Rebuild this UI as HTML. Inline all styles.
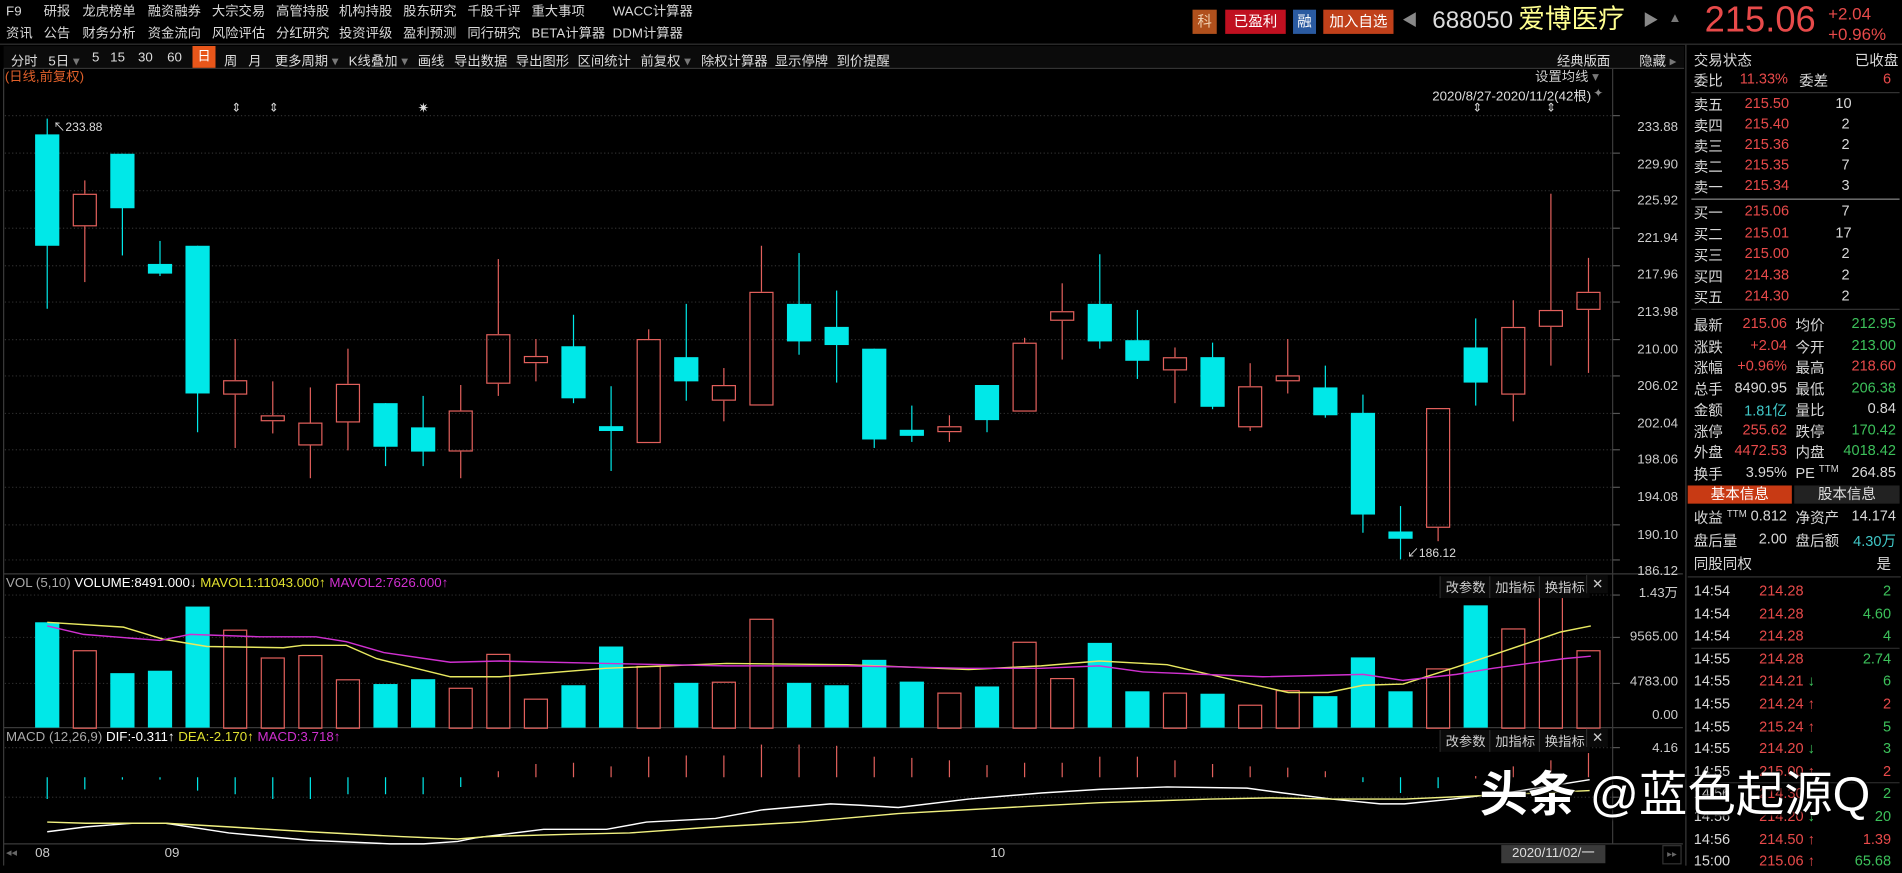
<!DOCTYPE html>
<html><head><meta charset="utf-8">
<style>
html,body{margin:0;padding:0;background:#000;width:1902px;height:866px;overflow:hidden}
#s{position:absolute;left:0;top:0;width:1571px;height:715px;transform:scale(1.21069);transform-origin:0 0;background:#000;font-family:"Liberation Sans","Noto Sans CJK SC",sans-serif;color:#d8d8d8;font-size:11px}
.a{position:absolute;white-space:nowrap;line-height:1}
.r{color:#e84a4a}.g{color:#3cc05a}.w{color:#e0e0e0}
.tb span{position:absolute;top:42px;font-size:11px;color:#ddd}
.rp{position:absolute;left:1393px;width:178px}
.row{position:absolute;left:0;width:175px;height:17px;font-size:12px}
.row span{position:absolute;top:0;white-space:nowrap}
.btn{position:absolute;font-size:11px;color:#ccc;background:#0a0a0a;border-left:1px solid #2a2a2a;padding:1px 4px}
</style></head><body><div id="s">
<div class="a" style="left:5px;top:5px">F9</div>
<div class="a" style="left:36px;top:5px">研报</div>
<div class="a" style="left:68px;top:5px">龙虎榜单</div>
<div class="a" style="left:122px;top:5px">融资融券</div>
<div class="a" style="left:175px;top:5px">大宗交易</div>
<div class="a" style="left:228px;top:5px">高管持股</div>
<div class="a" style="left:280px;top:5px">机构持股</div>
<div class="a" style="left:333px;top:5px">股东研究</div>
<div class="a" style="left:386px;top:5px">千股千评</div>
<div class="a" style="left:439px;top:5px">重大事项</div>
<div class="a" style="left:506px;top:5px">WACC计算器</div>
<div class="a" style="left:5px;top:23px">资讯</div>
<div class="a" style="left:36px;top:23px">公告</div>
<div class="a" style="left:68px;top:23px">财务分析</div>
<div class="a" style="left:122px;top:23px">资金流向</div>
<div class="a" style="left:175px;top:23px">风险评估</div>
<div class="a" style="left:228px;top:23px">分红研究</div>
<div class="a" style="left:280px;top:23px">投资评级</div>
<div class="a" style="left:333px;top:23px">盈利预测</div>
<div class="a" style="left:386px;top:23px">同行研究</div>
<div class="a" style="left:439px;top:23px">BETA计算器</div>
<div class="a" style="left:506px;top:23px">DDM计算器</div>
<div class="a" style="left:985px;top:8px;width:20px;height:20px;background:#b0501c;color:#f0d0b0;font-size:12px;line-height:20px;text-align:center">科</div>
<div class="a" style="left:1012px;top:8px;width:50px;height:20px;background:#c01020;color:#fff;font-size:12px;line-height:20px;text-align:center">已盈利</div>
<div class="a" style="left:1068px;top:8px;width:19px;height:20px;background:#2a5aa0;color:#fff;font-size:12px;line-height:20px;text-align:center">融</div>
<div class="a" style="left:1093px;top:8px;width:58px;height:20px;background:#c0401a;color:#fff;font-size:12px;line-height:20px;text-align:center">加入自选</div>
<div class="a" style="left:1158px;top:10px;color:#888;font-size:13px">◀</div>
<div class="a" style="left:1183px;top:7px;color:#ddd;font-size:20px">688050</div>
<div class="a" style="left:1254px;top:5px;color:#ffff90;font-size:22px">爱博医疗</div>
<div class="a" style="left:1357px;top:10px;color:#888;font-size:13px">▶</div>
<div class="a" style="left:1378px;top:10px;color:#777;font-size:11px">▲</div>
<div class="a" style="left:1408px;top:2px;color:#e84a4a;font-size:30px">215.06</div>
<div class="a" style="left:1510px;top:4px;color:#e84a4a;font-size:14px">+2.04</div>
<div class="a" style="left:1510px;top:21px;color:#e84a4a;font-size:14px">+0.96%</div>
<div class="a" style="left:0;top:36px;width:1571px;height:1px;background:#333"></div>
<div class="a" style="left:3px;top:38px;width:1388px;height:18px;background:#0b0b0b;border-bottom:1px solid #333"></div>
<div class="tb">
<span style="left:9px">分时</span><span style="left:40px">5日 <b style="color:#777;font-weight:normal">▾</b></span><span style="left:76px">5</span><span style="left:91px">15</span><span style="left:114px">30</span><span style="left:138px">60</span>
<span style="left:159px;top:38px;width:19px;height:18px;background:#e8561a;color:#fff;text-align:center;line-height:18px">日</span>
<span style="left:185px">周</span><span style="left:205px">月</span><span style="left:227px">更多周期 <b style="color:#777;font-weight:normal">▾</b></span><span style="left:288px">K线叠加 <b style="color:#777;font-weight:normal">▾</b></span><span style="left:345px">画线</span><span style="left:375px">导出数据</span><span style="left:426px">导出图形</span><span style="left:477px">区间统计</span><span style="left:529px">前复权 <b style="color:#777;font-weight:normal">▾</b></span><span style="left:579px">除权计算器</span><span style="left:640px">显示停牌</span><span style="left:691px">到价提醒</span>
<span style="left:1286px">经典版面</span><span style="left:1354px">隐藏 <b style="color:#777;font-weight:normal">▸</b></span>
</div>
<div class="a" style="left:4px;top:59px;color:#e0602a;font-size:11px">(日线,前复权)</div>
<div class="a" style="left:1268px;top:59px;color:#ccc;font-size:11px">设置均线 <span style="color:#777">▾</span></div>
<div class="a" style="left:1183px;top:75px;color:#ddd;font-size:11px">2020/8/27-2020/11/2(42根)</div>
<div class="a" style="left:1316px;top:73px;color:#888;font-size:10px">✦</div>
<div class="a" style="left:191px;top:85px;color:#ddd;font-size:10px">⇕</div>
<div class="a" style="left:222px;top:85px;color:#ddd;font-size:10px">⇕</div>
<div class="a" style="left:345px;top:85px;color:#ddd;font-size:11px">✷</div>
<div class="a" style="left:1216px;top:85px;color:#ddd;font-size:10px">⇕</div>
<div class="a" style="left:1277px;top:85px;color:#ddd;font-size:10px">⇕</div>
<div class="a" style="left:44px;top:101px;color:#ddd;font-size:10px">↖233.88</div>
<div class="a" style="left:1162px;top:453px;color:#ddd;font-size:10px">↙186.12</div>

<svg class="a" style="left:0;top:0" width="1571" height="715" id="sv"></svg>

<div class="a" style="left:1340px;top:90px;width:46px;text-align:right;font-size:11px;color:#ccc;line-height:30.6px">233.88<br>229.90<br>225.92<br>221.94<br>217.96<br>213.98<br>210.00<br>206.02<br>202.04<br>198.06<br>194.08<br>190.10<br>186.12</div>
<div class="a" style="left:1336px;top:485px;width:50px;text-align:right;font-size:11px;color:#ccc">1.43万</div>
<div class="a" style="left:1336px;top:521px;width:50px;text-align:right;font-size:11px;color:#ccc">9565.00</div>
<div class="a" style="left:1336px;top:558px;width:50px;text-align:right;font-size:11px;color:#ccc">4783.00</div>
<div class="a" style="left:1336px;top:586px;width:50px;text-align:right;font-size:11px;color:#ccc">0.00</div>
<div class="a" style="left:1336px;top:613px;width:50px;text-align:right;font-size:11px;color:#ccc">4.16</div>
<div class="a" style="left:5px;top:477px;font-size:11px"><span style="color:#aaa">VOL (5,10)</span> <span style="color:#fff">VOLUME:8491.000↓</span> <span style="color:#e0e030">MAVOL1:11043.000↑</span> <span style="color:#d030d0">MAVOL2:7626.000↑</span></div>
<div class="a" style="left:5px;top:604px;font-size:11px"><span style="color:#aaa">MACD (12,26,9)</span> <span style="color:#fff">DIF:-0.311↑</span> <span style="color:#e0e030">DEA:-2.170↑</span> <span style="color:#d030d0">MACD:3.718↑</span></div>
<div class="btn" style="left:1189px;top:476px">改参数</div><div class="btn" style="left:1230px;top:476px">加指标</div><div class="btn" style="left:1271px;top:476px">换指标</div><div class="btn" style="left:1310px;top:475px">✕</div>
<div class="btn" style="left:1189px;top:603px">改参数</div><div class="btn" style="left:1230px;top:603px">加指标</div><div class="btn" style="left:1271px;top:603px">换指标</div><div class="btn" style="left:1310px;top:602px">✕</div>
<div class="a" style="left:5px;top:700px;color:#666;font-size:9px">◂◂</div>
<div class="a" style="left:29px;top:700px;color:#ccc;font-size:11px">08</div>
<div class="a" style="left:136px;top:700px;color:#ccc;font-size:11px">09</div>
<div class="a" style="left:818px;top:700px;color:#ccc;font-size:11px">10</div>
<div class="a" style="left:1240px;top:698px;width:86px;height:15px;background:#3a3a3a;color:#ddd;font-size:11px;line-height:15px;text-align:center">2020/11/02/一</div>
<div class="a" style="left:1373px;top:698px;width:14px;height:14px;border:1px solid #333;color:#666;font-size:8px;text-align:center;line-height:14px">▸▸</div>

<div class="a" style="left:1392px;top:37px;width:1px;height:678px;background:#3a3a3a"></div>
<div class="rp" style="top:40px;height:675px">
<div class="row" style="top:1px"><span style="left:6px">交易状态</span><span style="right:0">已收盘</span></div>
<div class="row" style="top:18px"><span style="left:6px">委比</span><span class="r" style="left:44px">11.33%</span><span style="left:93px">委差</span><span class="r" style="right:6px">6</span></div>
<div class="a" style="left:4px;top:36px;width:172px;height:1px;background:#333"></div>
<div class="row" style="top:38px"><span style="left:6px">卖五</span><span class="r" style="left:48px">215.50</span><span style="left:123px">10</span></div>
<div class="row" style="top:55px"><span style="left:6px">卖四</span><span class="r" style="left:48px">215.40</span><span style="left:128px">2</span></div>
<div class="row" style="top:72px"><span style="left:6px">卖三</span><span class="r" style="left:48px">215.36</span><span style="left:128px">2</span></div>
<div class="row" style="top:89px"><span style="left:6px">卖二</span><span class="r" style="left:48px">215.35</span><span style="left:128px">7</span></div>
<div class="row" style="top:106px"><span style="left:6px">卖一</span><span class="r" style="left:48px">215.34</span><span style="left:128px">3</span></div>
<div class="a" style="left:4px;top:124px;width:172px;height:1px;background:#888"></div>
<div class="row" style="top:127px"><span style="left:6px">买一</span><span class="r" style="left:48px">215.06</span><span style="left:128px">7</span></div>
<div class="row" style="top:145px"><span style="left:6px">买二</span><span class="r" style="left:48px">215.01</span><span style="left:123px">17</span></div>
<div class="row" style="top:162px"><span style="left:6px">买三</span><span class="r" style="left:48px">215.00</span><span style="left:128px">2</span></div>
<div class="row" style="top:180px"><span style="left:6px">买四</span><span class="r" style="left:48px">214.38</span><span style="left:128px">2</span></div>
<div class="row" style="top:197px"><span style="left:6px">买五</span><span class="r" style="left:48px">214.30</span><span style="left:128px">2</span></div>
<div class="a" style="left:4px;top:215px;width:172px;height:1px;background:#333"></div>
<div class="row" style="top:220px"><span style="left:6px">最新</span><span class="r" style="right:92px">215.06</span><span style="left:90px">均价</span><span class="g" style="right:2px">212.95</span></div>
<div class="row" style="top:238px"><span style="left:6px">涨跌</span><span class="r" style="right:92px">+2.04</span><span style="left:90px">今开</span><span class="g" style="right:2px">213.00</span></div>
<div class="row" style="top:255px"><span style="left:6px">涨幅</span><span class="r" style="right:92px">+0.96%</span><span style="left:90px">最高</span><span class="r" style="right:2px">218.60</span></div>
<div class="row" style="top:273px"><span style="left:6px">总手</span><span style="right:92px">8490.95</span><span style="left:90px">最低</span><span class="g" style="right:2px">206.38</span></div>
<div class="row" style="top:290px"><span style="left:6px">金额</span><span style="right:92px;color:#40c8c8">1.81亿</span><span style="left:90px">量比</span><span style="right:2px">0.84</span></div>
<div class="row" style="top:308px"><span style="left:6px">涨停</span><span class="r" style="right:92px">255.62</span><span style="left:90px">跌停</span><span class="g" style="right:2px">170.42</span></div>
<div class="row" style="top:325px"><span style="left:6px">外盘</span><span class="r" style="right:92px">4472.53</span><span style="left:90px">内盘</span><span class="g" style="right:2px">4018.42</span></div>
<div class="row" style="top:343px"><span style="left:6px">换手</span><span style="right:92px">3.95%</span><span style="left:90px">PE <sup style="font-size:8px">TTM</sup></span><span style="right:2px">264.85</span></div>
<div class="a" style="left:1px;top:361px;width:86px;height:15px;background:#c83a14;color:#fff;font-size:12px;line-height:15px;text-align:center">基本信息</div>
<div class="a" style="left:89px;top:361px;width:87px;height:15px;background:#222;color:#ddd;font-size:12px;line-height:15px;text-align:center">股本信息</div>
<div class="row" style="top:379px"><span style="left:6px">收益 <sup style="font-size:8px">TTM</sup></span><span style="right:92px">0.812</span><span style="left:90px">净资产</span><span style="right:2px">14.174</span></div>
<div class="row" style="top:398px"><span style="left:6px">盘后量</span><span style="right:92px">2.00</span><span style="left:90px">盘后额</span><span style="right:2px;color:#40c8c8">4.30万</span></div>
<div class="row" style="top:417px"><span style="left:6px">同股同权</span><span style="right:6px">是</span></div>
<div class="a" style="left:1px;top:436px;width:176px;height:1px;background:#333"></div>
<div id="trades"></div>
</div>
<div class="a" style="left:1222px;top:637px;color:#fff;font-size:40px;text-shadow:0 0 3px #000,1px 1px 2px #000"><b>头条</b> @蓝色起源Q</div>
</div>
<script>
var s='';
function L(x1,y1,x2,y2,c,w,d){s+='<line x1="'+x1+'" y1="'+y1+'" x2="'+x2+'" y2="'+y2+'" stroke="'+c+'" stroke-width="'+(w||1)+'"'+(d?' stroke-dasharray="'+d+'"':'')+'/>';}
L(1332,57,1332,697,'#3a3a3a');L(3,57,3,715,'#3a3a3a');
L(3,474,1390,474,'#3a3a3a');L(3,601,1390,601,'#3a3a3a');L(3,697,1390,697,'#3a3a3a');
[95,126,157,188,219,249,280,310,341,371,402,433,462].forEach(function(y){L(4,y+.5,1332,y+.5,'#2e2e2e',1,'1 2');L(1332,y+.5,1338,y+.5,'#555')});
[491,526,564,617,658].forEach(function(y){L(4,y+.5,1332,y+.5,'#2e2e2e',1,'1 2');L(1332,y+.5,1338,y+.5,'#555')});
var C=[[111,203,98,255,0],[160,187,149,233,1],[127,172,127,211,0],[218,226,199,228,0],[203,325,203,357,0],[314,326,280,370,1],[343,348,315,358,1],[349,368,320,395,1],[317,349,288,372,1],[333,369,333,385,0],[353,373,327,385,0],[339,373,318,395,1],[276,317,214,327,1],[294,300,280,315,1],[286,329,260,333,0],[352,356,319,389,0],[280,366,272,366,1],[295,315,251,331,0],[318,331,304,348,1],[241,335,203,335,1],[251,282,209,293,0],[270,285,240,316,0],[288,363,288,370,0],[355,360,335,365,0],[352,357,343,365,1],[318,347,318,357,0],[283,340,279,340,1],[257,265,234,297,1],[251,282,210,288,0],[281,298,256,313,0],[295,306,287,333,1],[295,336,283,338,0],[319,353,300,356,1],[310,315,280,325,1],[320,343,302,345,0],[341,425,326,440,0],[439,445,418,462,0],[337,436,337,447,1],[287,316,263,335,0],[270,326,248,348,1],[256,270,160,302,1],[241,256,213,308,1]];
var V=[514,537,556,554,501,520,543,541,561,565,561,568,540,577,566,534,550,564,563,511,564,566,545,563,572,567,530,560,531,571,572,573,582,570,575,543,571,552,500,519,492,537];
var M=[[642,660],[642,652],[642,644],[642,644],[642,653],[642,656],[642,660],[642,660],[642,656],[642,656],[642,656],[642,650],[637,642],[631,642],[630,642],[633,642],[625,642],[624,642],[624,642],[615,642],[615,642],[616,642],[625,642],[626,642],[628,642],[632,642],[630,642],[630,642],[625,642],[625,642],[628,642],[631,642],[633,642],[634,642],[637,642],[642,646],[642,655],[642,651],[641,643],[633,642],[628,642],[622,642]];
var R='#e2605c',Q='#00e8e8';
for(var i=0;i<42;i++){var x=39+i*31.05,c=C[i],h=c[1]-c[0];if(h<2)h=2;
 if(c[4]){L(x,c[2],x,c[0],R);L(x,c[1],x,c[3],R);s+='<rect x="'+(x-9.5)+'" y="'+(c[0]+.5)+'" width="19" height="'+(h-1)+'" fill="none" stroke="'+R+'"/>';}
 else{L(x,c[2],x,c[3],Q);s+='<rect x="'+(x-10)+'" y="'+c[0]+'" width="20" height="'+h+'" fill="'+Q+'"/>';}
 var v=V[i];
 if(c[4])s+='<rect x="'+(x-9.5)+'" y="'+(v+.5)+'" width="19" height="'+(601-v)+'" fill="none" stroke="'+R+'"/>';
 else s+='<rect x="'+(x-10)+'" y="'+v+'" width="20" height="'+(601-v)+'" fill="'+Q+'"/>';
 var m=M[i];L(x,m[0],x,m[1],m[0]<642?R:Q);
}
function P(pts,c){s+='<polyline fill="none" stroke="'+c+'" stroke-width="1.2" points="'+pts+'"/>';}
P('39,514 102,518 135,528 171,534 234,535 250,533 286,533 311,544 372,559 413,559 500,552 600,548 700,549 800,553 860,550 908,546 964,549 1064,572 1097,572 1126,566 1159,565 1203,551 1233,541 1289,522 1314,517','#e8e860');
P('39,517 69,524 132,529 157,524 215,526 261,526 286,530 317,539 372,547 413,546 500,548 600,550 700,550 800,552 860,552 908,550 944,555 1043,559 1126,557 1159,562 1203,557 1233,552 1292,544 1314,542','#d030d0');
P('39,687 71,683 109,680 137,680 189,688 255,694 322,697 350,697 378,695 393,692 449,685 501,685 534,679 591,676 629,669 686,664 709,665 742,667 800,660 860,655 908,652 964,650 1030,651 1060,655 1100,660 1140,664 1160,664 1200,660 1250,654 1313,644','#ffffff');
P('39,679 71,680 137,680 189,683 255,687 331,691 378,693 402,691 473,689 520,688 591,683 662,679 742,672 850,666 908,663 1000,660 1050,659 1100,660 1160,660 1250,656 1313,653','#f0f080');
document.getElementById('sv').innerHTML=s;
var T=[['14:54','214.28','','2','g'],['14:54','214.28','','4.60','g'],['14:54','214.28','','4','g'],['14:55','214.28','','2.74','g'],['14:55','214.21','↓','6','g'],['14:55','214.24','↑','2','r'],['14:55','215.24','↑','5','g'],['14:55','214.20','↓','3','g'],['14:55','215.00','↑','2','r'],['14:56','214.30','↓','2','g'],['14:56','214.20','↓','20','g'],['14:56','214.50','↑','1.39','r'],['15:00','215.06','↑','65.68','g']];
var h='';T.forEach(function(t,k){var y=441+k*18.6;if(k==3||k==9)h+='<div class="a" style="left:4px;top:'+(y-2)+'px;width:172px;height:1px;background:#2a2a2a"></div>';
h+='<div class="row" style="top:'+y+'px"><span style="left:6px">'+t[0]+'</span><span class="r" style="left:60px">'+t[1]+' <b class="'+(t[2]=='↓'?'g':'r')+'">'+t[2]+'</b></span><span class="'+t[4]+'" style="right:6px">'+t[3]+'</span></div>';});
document.getElementById('trades').innerHTML=h;
</script>
</body></html>
